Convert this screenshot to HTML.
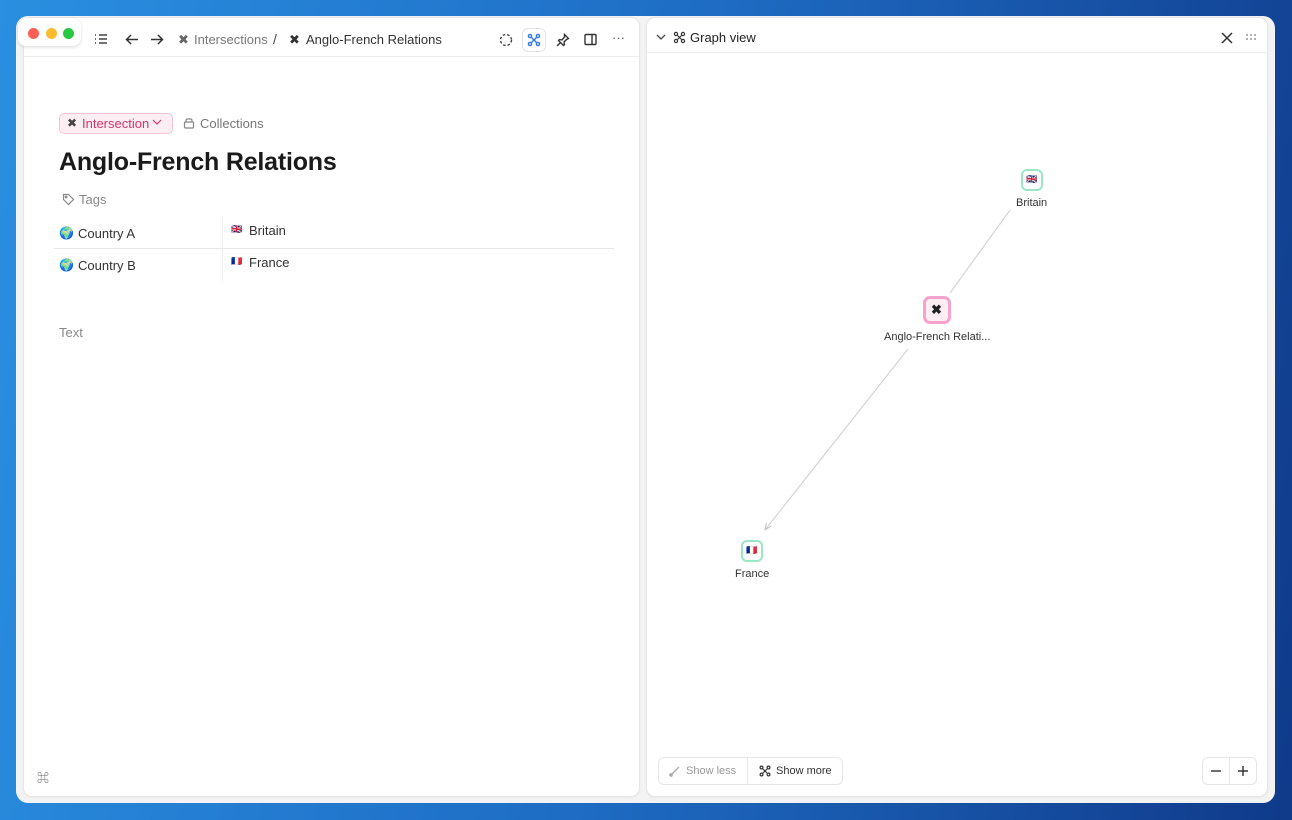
<!DOCTYPE html>
<html><head><meta charset="utf-8"><style>
*{box-sizing:border-box;margin:0;padding:0}
body{width:1292px;height:820px;overflow:hidden;font-family:"Liberation Sans","Noto Sans CJK JP",sans-serif;background:linear-gradient(100deg,#2a8fe0 0%,#1e6cc4 50%,#103a8a 100%);position:relative}
.win{position:absolute;left:16px;top:16px;width:1259px;height:787px;background:#f3f3f4;border-radius:12px}
.panel{position:absolute;background:#fff;border-radius:8px;box-shadow:0 0 0 1px #e6e6e8,0 1px 3px rgba(0,0,0,.08)}
.abs{position:absolute}
.t{position:absolute;font-size:13px;color:#333;white-space:nowrap}
svg{position:absolute}
</style></head><body>
<div class="win"></div>
<div class="panel" style="left:24px;top:18px;width:615px;height:778px"></div>
<div class="panel" style="left:647px;top:18px;width:620px;height:778px"></div>
<div class="abs" style="left:18px;top:18px;width:63px;height:28px;background:#fff;border-radius:8px;box-shadow:0 1px 3px rgba(0,0,0,.15)"></div>
<div class="abs" style="left:28px;top:28px;width:11px;height:11px;border-radius:50%;background:#fe5f57"></div>
<div class="abs" style="left:46px;top:28px;width:11px;height:11px;border-radius:50%;background:#febc2e"></div>
<div class="abs" style="left:63px;top:28px;width:11px;height:11px;border-radius:50%;background:#28c840"></div>
<div class="abs" style="left:24px;top:56px;width:615px;height:1px;background:#eee"></div>
<div class="abs" style="left:647px;top:52px;width:620px;height:1px;background:#eee"></div>
<svg style="left:94px;top:33px" width="14" height="12" stroke="#444" stroke-width="1.4" fill="none"><path d="M1 2h1M5 2h8M1 6h1M5 6h8M1 10h1M5 10h8"/></svg>
<svg style="left:125px;top:33px" width="14" height="13" stroke="#333" stroke-width="1.5" fill="none"><path d="M13 6.5H2M6 2L1.5 6.5 6 11"/></svg>
<svg style="left:150px;top:33px" width="14" height="13" stroke="#333" stroke-width="1.5" fill="none"><path d="M1 6.5h11M8 2l4.5 4.5L8 11"/></svg>
<div class="t" style="left:178px;top:32px;color:#666">✖</div>
<div class="t" style="left:194px;top:32px;color:#777">Intersections</div>
<div class="t" style="left:273px;top:31px;color:#444;font-size:14px">/</div>
<div class="t" style="left:289px;top:32px;color:#333">✖</div>
<div class="t" style="left:306px;top:32px;color:#333">Anglo-French Relations</div>
<svg style="left:499px;top:33px" width="14" height="14" fill="none" stroke="#444" stroke-width="1.4" stroke-dasharray="2.5 2"><circle cx="7" cy="7" r="5.5"/></svg>
<div class="abs" style="left:522px;top:28px;width:24px;height:24px;border:1px solid #e3e3e6;border-radius:6px"></div>
<svg style="left:527px;top:33px" width="14" height="14" fill="none" stroke="#2f7be0" stroke-width="1.4"><circle cx="3" cy="3" r="1.6"/><circle cx="11" cy="3" r="1.6"/><circle cx="3" cy="11" r="1.6"/><circle cx="11" cy="11" r="1.6"/><path d="M4.5 4.5l5 5M9.5 4.5l-5 5"/></svg>
<svg style="left:556px;top:33px" width="14" height="14" fill="none" stroke="#333" stroke-width="1.4"><path d="M8.5 1.5l4 4-2 1-2.5 2.5.5 2.5-1 1-5-5 1-1 2.5.5L8.5 4z M4 10l-3 3"/></svg>
<svg style="left:584px;top:33px" width="13" height="13" fill="none" stroke="#333" stroke-width="1.4"><rect x="1" y="1.5" width="11" height="10" rx="1"/><path d="M8 1.5v10"/></svg>
<div class="t" style="left:612px;top:30px;color:#555">···</div>
<div class="abs" style="left:59px;top:113px;width:114px;height:21px;border:1px solid #f6c4d4;background:#fdeef3;border-radius:5px"></div>
<div class="t" style="left:67px;top:116px;color:#444;font-size:12px">✖</div>
<div class="t" style="left:82px;top:116px;color:#d8336a">Intersection</div>
<svg style="left:152px;top:119px" width="10" height="7" fill="none" stroke="#d8336a" stroke-width="1.2"><path d="M1 1l4 4 4-4"/></svg>
<svg style="left:183px;top:117px" width="12" height="12" fill="none" stroke="#888" stroke-width="1.2"><rect x="1.5" y="5" width="9" height="6" rx="1"/><path d="M3 5V3.5A1.5 1.5 0 0 1 4.5 2h3A1.5 1.5 0 0 1 9 3.5V5"/></svg>
<div class="t" style="left:200px;top:116px;color:#777">Collections</div>
<div class="t" style="left:59px;top:148px;font-size:25px;font-weight:bold;color:#1a1a1a;letter-spacing:-.2px">Anglo-French Relations</div>
<svg style="left:62px;top:193px" width="13" height="13" fill="none" stroke="#888" stroke-width="1.2"><path d="M1.5 1.5h5l5 5-5 5-5-5z"/><circle cx="4" cy="4" r=".8"/></svg>
<div class="t" style="left:79px;top:192px;color:#888">Tags</div>
<div class="abs" style="left:222px;top:217px;width:1px;height:64px;background:#eee"></div>
<div class="abs" style="left:54px;top:248px;width:560px;height:1px;background:#e8e8e8"></div>
<div class="t" style="left:59px;top:226px;font-size:12px">🌍</div>
<div class="t" style="left:78px;top:226px">Country A</div>
<div class="t" style="left:59px;top:258px;font-size:12px">🌍</div>
<div class="t" style="left:78px;top:258px">Country B</div>
<div class="t" style="left:231px;top:224px;font-size:9px">🇬🇧</div>
<div class="t" style="left:249px;top:223px">Britain</div>
<div class="t" style="left:231px;top:256px;font-size:9px">🇫🇷</div>
<div class="t" style="left:249px;top:255px">France</div>
<div class="t" style="left:59px;top:319px;color:#888;font-size:13px;top:320px;line-height:14px;padding-top:6px">Text</div>
<div class="t" style="left:37px;top:769px;color:#666;font-size:12px">⌘</div>
<svg style="left:656px;top:34px" width="10" height="7" fill="none" stroke="#444" stroke-width="1.3"><path d="M1 1l4 4 4-4"/></svg>
<svg style="left:673px;top:31px" width="13" height="13" fill="none" stroke="#333" stroke-width="1.2"><circle cx="3" cy="3" r="1.6"/><circle cx="10" cy="3" r="1.6"/><circle cx="3" cy="10" r="1.6"/><circle cx="10" cy="10" r="1.6"/><path d="M4.5 4.5l4 4M8.5 4.5l-4 4"/></svg>
<div class="t" style="left:690px;top:30px;color:#222">Graph view</div>
<svg style="left:1221px;top:32px" width="12" height="12" stroke="#333" stroke-width="1.5"><path d="M1 1l10 10M11 1L1 11"/></svg>
<svg style="left:1246px;top:34px" width="11" height="7" fill="#777"><circle cx="1" cy="1" r=".9"/><circle cx="5" cy="1" r=".9"/><circle cx="9" cy="1" r=".9"/><circle cx="1" cy="5" r=".9"/><circle cx="5" cy="5" r=".9"/><circle cx="9" cy="5" r=".9"/></svg>
<svg style="left:647px;top:53px" width="620" height="700"><path d="M363 157L303 240M261 296L118 477" stroke="#d4d4d4" stroke-width="1.2"/><path d="M118 477l1.5-7M118 477l6-4" stroke="#c8c8c8" stroke-width="1.2" fill="none"/></svg>
<div class="abs" style="left:1021px;top:169px;width:22px;height:22px;border:2px solid #9be6c6;border-radius:6px;background:#fff"></div>
<div class="t" style="left:1026px;top:174px;font-size:9px">🇬🇧</div>
<div class="t" style="left:1016px;top:197px;font-size:11px">Britain</div>
<div class="abs" style="left:923px;top:296px;width:28px;height:28px;border:3px solid #f5a3cd;border-radius:7px;background:#fdeef5"></div>
<div class="t" style="left:931px;top:302px;font-size:13px;color:#222;font-weight:bold">✖</div>
<div class="t" style="left:884px;top:331px;font-size:11px">Anglo-French Relati...</div>
<div class="abs" style="left:741px;top:540px;width:22px;height:22px;border:2px solid #9be6c6;border-radius:6px;background:#fff"></div>
<div class="t" style="left:746px;top:545px;font-size:9px">🇫🇷</div>
<div class="t" style="left:735px;top:568px;font-size:11px">France</div>
<div class="abs" style="left:658px;top:757px;width:185px;height:28px;border:1px solid #e6e6e8;border-radius:6px"></div>
<div class="abs" style="left:747px;top:757px;width:1px;height:28px;background:#e6e6e8"></div>
<svg style="left:669px;top:765px" width="12" height="12" stroke="#aaa" stroke-width="1.3"><path d="M2 10L10 2"/><circle cx="2" cy="10" r="1.2" fill="#aaa"/></svg>
<div class="t" style="left:686px;top:765px;font-size:11px;color:#999">Show less</div>
<svg style="left:759px;top:765px" width="12" height="12" fill="none" stroke="#333" stroke-width="1.2"><circle cx="2.5" cy="2.5" r="1.4"/><circle cx="9.5" cy="2.5" r="1.4"/><circle cx="2.5" cy="9.5" r="1.4"/><circle cx="9.5" cy="9.5" r="1.4"/><path d="M4 4l4 4M8 4l-4 4"/></svg>
<div class="t" style="left:776px;top:765px;font-size:11px;color:#333">Show more</div>
<div class="abs" style="left:1202px;top:757px;width:55px;height:28px;border:1px solid #e6e6e8;border-radius:6px"></div>
<div class="abs" style="left:1229px;top:757px;width:1px;height:28px;background:#e6e6e8"></div>
<svg style="left:1210px;top:765px" width="12" height="12" stroke="#333" stroke-width="1.4"><path d="M1 6h10"/></svg>
<svg style="left:1237px;top:765px" width="12" height="12" stroke="#333" stroke-width="1.4"><path d="M1 6h10M6 1v10"/></svg>
</body></html>
